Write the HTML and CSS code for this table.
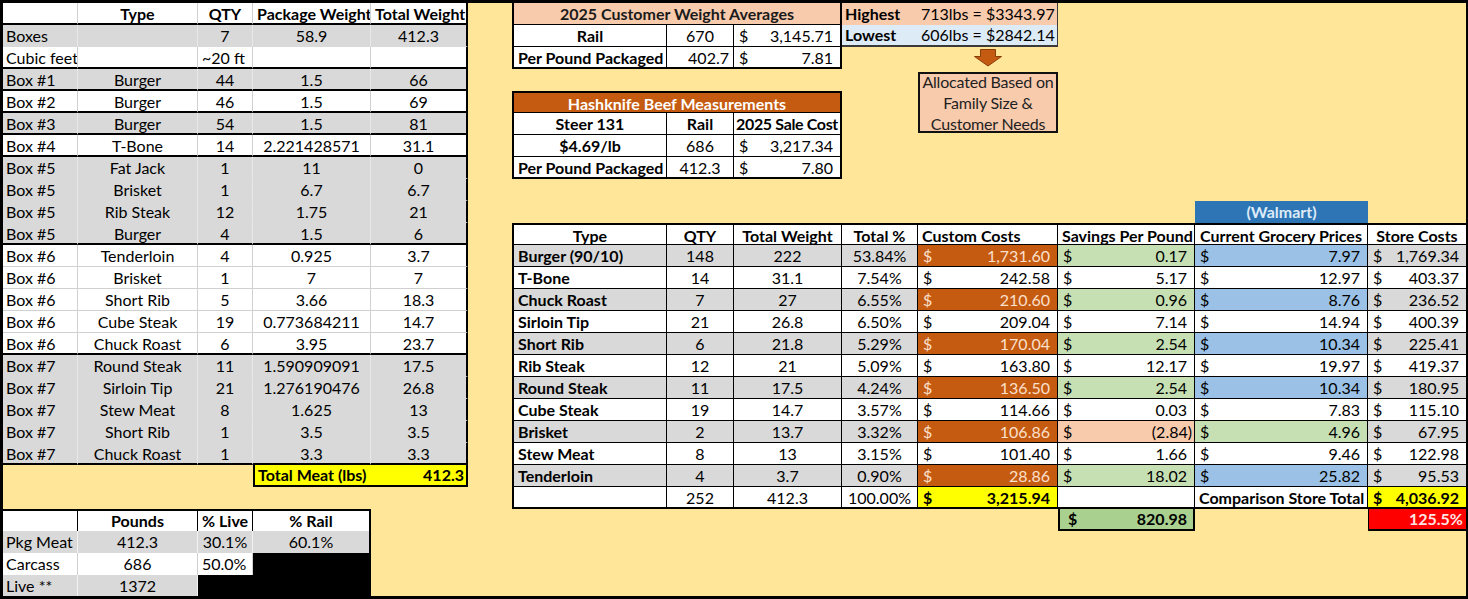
FILE: index.html
```html
<!DOCTYPE html>
<html lang="en">
<head>
<meta charset="utf-8">
<title>Hashknife Beef Measurements</title>
<link rel="stylesheet" href="styles.css">
</head>
<body>
<main class="sheet">

  <section class="tbl lt">
    <div class="r hd end"><div></div><div>Type</div><div>QTY</div><div>Package Weight</div><div>Total Weight</div></div>
    <div class="r g"><div>Boxes</div><div></div><div>7</div><div>58.9</div><div>412.3</div></div>
    <div class="r end"><div>Cubic feet</div><div></div><div class="left">~20 ft</div><div></div><div></div></div>
    <div class="r g end"><div>Box #1</div><div>Burger</div><div>44</div><div>1.5</div><div>66</div></div>
    <div class="r end"><div>Box #2</div><div>Burger</div><div>46</div><div>1.5</div><div>69</div></div>
    <div class="r g end"><div>Box #3</div><div>Burger</div><div>54</div><div>1.5</div><div>81</div></div>
    <div class="r end"><div>Box #4</div><div>T-Bone</div><div>14</div><div>2.221428571</div><div>31.1</div></div>
    <div class="r g"><div>Box #5</div><div>Fat Jack</div><div>1</div><div>11</div><div>0</div></div>
    <div class="r g"><div>Box #5</div><div>Brisket</div><div>1</div><div>6.7</div><div>6.7</div></div>
    <div class="r g"><div>Box #5</div><div>Rib Steak</div><div>12</div><div>1.75</div><div>21</div></div>
    <div class="r g end"><div>Box #5</div><div>Burger</div><div>4</div><div>1.5</div><div>6</div></div>
    <div class="r"><div>Box #6</div><div>Tenderloin</div><div>4</div><div>0.925</div><div>3.7</div></div>
    <div class="r"><div>Box #6</div><div>Brisket</div><div>1</div><div>7</div><div>7</div></div>
    <div class="r"><div>Box #6</div><div>Short Rib</div><div>5</div><div>3.66</div><div>18.3</div></div>
    <div class="r"><div>Box #6</div><div>Cube Steak</div><div>19</div><div>0.773684211</div><div>14.7</div></div>
    <div class="r end"><div>Box #6</div><div>Chuck Roast</div><div>6</div><div>3.95</div><div>23.7</div></div>
    <div class="r g"><div>Box #7</div><div>Round Steak</div><div>11</div><div>1.590909091</div><div>17.5</div></div>
    <div class="r g"><div>Box #7</div><div>Sirloin Tip</div><div>21</div><div>1.276190476</div><div>26.8</div></div>
    <div class="r g"><div>Box #7</div><div>Stew Meat</div><div>8</div><div>1.625</div><div>13</div></div>
    <div class="r g"><div>Box #7</div><div>Short Rib</div><div>1</div><div>3.5</div><div>3.5</div></div>
    <div class="r g end"><div>Box #7</div><div>Chuck Roast</div><div>1</div><div>3.3</div><div>3.3</div></div>
  </section>

  <div class="total-meat"><span>Total Meat (lbs)</span><span>412.3</span></div>

  <section class="tbl stats">
    <div class="r hd"><div></div><div>Pounds</div><div>% Live</div><div>% Rail</div></div>
    <div class="r g"><div>Pkg Meat</div><div>412.3</div><div>30.1%</div><div>60.1%</div></div>
    <div class="r"><div>Carcass</div><div>686</div><div class="left">50.0%</div><div class="blk"></div></div>
    <div class="r g"><div>Live **</div><div>1372</div><div class="blk"></div><div class="blk"></div></div>
  </section>

  <section class="tbl cwa">
    <div class="r"><div class="span3 peach b">2025 Customer Weight Averages</div></div>
    <div class="r"><div class="b">Rail</div><div>670</div><div class="acc"><span>$</span><span>3,145.71</span></div></div>
    <div class="r"><div class="b">Per Pound Packaged</div><div class="right">402.7</div><div class="acc"><span>$</span><span>7.81</span></div></div>
  </section>

  <section class="tbl hl">
    <div class="r hi"><div class="b left">Highest</div><div class="right">713lbs = $3343.97</div></div>
    <div class="r lo"><div class="b left">Lowest</div><div class="right">606lbs = $2842.14</div></div>
  </section>

  <div class="arrow">
    <svg width="30" height="18" viewBox="0 0 30 18" aria-hidden="true">
      <path d="M7.5 0.5 H22.5 V7.5 H28.5 L15 17 L1.5 7.5 H7.5 Z" fill="#c55a11" stroke="#8a3d0b" stroke-width="1"/>
    </svg>
  </div>

  <div class="alloc"><span>Allocated Based on</span><span>Family Size &amp;</span><span>Customer Needs</span></div>

  <section class="tbl hk">
    <div class="r"><div class="span3 rust b">Hashknife Beef Measurements</div></div>
    <div class="r"><div class="b">Steer 131</div><div class="b">Rail</div><div class="b tight">2025 Sale Cost</div></div>
    <div class="r"><div class="b">$4.69/lb</div><div>686</div><div class="acc"><span>$</span><span>3,217.34</span></div></div>
    <div class="r"><div class="b">Per Pound Packaged</div><div>412.3</div><div class="acc"><span>$</span><span>7.80</span></div></div>
  </section>

  <div class="walmart">(Walmart)</div>

  <section class="tbl bt">
    <div class="r hd"><div>Type</div><div>QTY</div><div>Total Weight</div><div>Total %</div><div class="left">Custom Costs</div><div>Savings Per Pound</div><div>Current Grocery Prices</div><div>Store Costs</div></div>
    <div class="r g"><div class="name">Burger (90/10)</div><div>148</div><div>222</div><div>53.84%</div><div class="acc or"><span>$</span><span>1,731.60</span></div><div class="acc gn"><span>$</span><span>0.17</span></div><div class="acc bu"><span>$</span><span>7.97</span></div><div class="acc gy"><span>$</span><span>1,769.34</span></div></div>
    <div class="r"><div class="name">T-Bone</div><div>14</div><div>31.1</div><div>7.54%</div><div class="acc"><span>$</span><span>242.58</span></div><div class="acc"><span>$</span><span>5.17</span></div><div class="acc"><span>$</span><span>12.97</span></div><div class="acc"><span>$</span><span>403.37</span></div></div>
    <div class="r g"><div class="name">Chuck Roast</div><div>7</div><div>27</div><div>6.55%</div><div class="acc or"><span>$</span><span>210.60</span></div><div class="acc gn"><span>$</span><span>0.96</span></div><div class="acc bu"><span>$</span><span>8.76</span></div><div class="acc gy"><span>$</span><span>236.52</span></div></div>
    <div class="r"><div class="name">Sirloin Tip</div><div>21</div><div>26.8</div><div>6.50%</div><div class="acc"><span>$</span><span>209.04</span></div><div class="acc"><span>$</span><span>7.14</span></div><div class="acc"><span>$</span><span>14.94</span></div><div class="acc"><span>$</span><span>400.39</span></div></div>
    <div class="r g"><div class="name">Short Rib</div><div>6</div><div>21.8</div><div>5.29%</div><div class="acc or"><span>$</span><span>170.04</span></div><div class="acc gn"><span>$</span><span>2.54</span></div><div class="acc bu"><span>$</span><span>10.34</span></div><div class="acc gy"><span>$</span><span>225.41</span></div></div>
    <div class="r"><div class="name">Rib Steak</div><div>12</div><div>21</div><div>5.09%</div><div class="acc"><span>$</span><span>163.80</span></div><div class="acc"><span>$</span><span>12.17</span></div><div class="acc"><span>$</span><span>19.97</span></div><div class="acc"><span>$</span><span>419.37</span></div></div>
    <div class="r g"><div class="name">Round Steak</div><div>11</div><div>17.5</div><div>4.24%</div><div class="acc or"><span>$</span><span>136.50</span></div><div class="acc gn"><span>$</span><span>2.54</span></div><div class="acc bu"><span>$</span><span>10.34</span></div><div class="acc gy"><span>$</span><span>180.95</span></div></div>
    <div class="r"><div class="name">Cube Steak</div><div>19</div><div>14.7</div><div>3.57%</div><div class="acc"><span>$</span><span>114.66</span></div><div class="acc"><span>$</span><span>0.03</span></div><div class="acc"><span>$</span><span>7.83</span></div><div class="acc"><span>$</span><span>115.10</span></div></div>
    <div class="r g"><div class="name">Brisket</div><div>2</div><div>13.7</div><div>3.32%</div><div class="acc or"><span>$</span><span>106.86</span></div><div class="acc pc neg"><span>$</span><span>(2.84)</span></div><div class="acc gn"><span>$</span><span>4.96</span></div><div class="acc gy"><span>$</span><span>67.95</span></div></div>
    <div class="r"><div class="name">Stew Meat</div><div>8</div><div>13</div><div>3.15%</div><div class="acc"><span>$</span><span>101.40</span></div><div class="acc"><span>$</span><span>1.66</span></div><div class="acc"><span>$</span><span>9.46</span></div><div class="acc"><span>$</span><span>122.98</span></div></div>
    <div class="r g"><div class="name">Tenderloin</div><div>4</div><div>3.7</div><div>0.90%</div><div class="acc or"><span>$</span><span>28.86</span></div><div class="acc gn"><span>$</span><span>18.02</span></div><div class="acc bu"><span>$</span><span>25.82</span></div><div class="acc gy"><span>$</span><span>95.53</span></div></div>
    <div class="r tot"><div></div><div>252</div><div>412.3</div><div>100.00%</div><div class="acc yl b"><span>$</span><span>3,215.94</span></div><div></div><div class="b">Comparison Store Total</div><div class="acc yl b"><span>$</span><span>4,036.92</span></div></div>
  </section>

  <div class="savings"><span>$</span><span>820.98</span></div>
  <div class="ratio">125.5%</div>

</main>
</body>
</html>
```

FILE: styles.css
```css
html, body {
  margin: 0;
  padding: 0;
}

body {
  background: #ffe699;
  font-family: Lato, "Open Sans", "Liberation Sans", sans-serif;
  font-size: 16px;
  color: #000;
}

.sheet {
  width: 1468px;
  height: 599px;
  box-sizing: border-box;
  border: 3px solid #000;
  border-right-width: 2px;
  background: #ffe699;
  display: grid;
  grid-template-columns: 75px 120px 55px 118px 97px 44px 155px 67px 108px 76px 140px 137px 173px 98px;
  grid-template-rows: repeat(26, 22px) 21px;
}

/* generic sheet table */
.tbl {
  display: grid;
  grid-auto-rows: 22px;
}

.r {
  display: contents;
}

.r > * {
  box-sizing: border-box;
  padding: 0 4px;
  line-height: 21px;
  white-space: nowrap;
  overflow: hidden;
  text-align: center;
  background: #fff;
}

.b { font-weight: 700; }
.sheet .r > .left { text-align: left; }
.sheet .r > .right { text-align: right; }
.sheet .r > .tight {
  padding: 0;
  letter-spacing: -0.35px;
}
.span3 { grid-column: span 3; }

.acc {
  display: flex;
  justify-content: space-between;
}

.sheet .r > .acc {
  padding: 0 7px 0 5px;
}

.sheet .r > .acc.neg {
  padding-right: 2px;
}

/* left box table */
.lt {
  grid-column: 1 / 6;
  grid-row: 1 / 22;
  grid-template-columns: 75px 120px 55px 118px 97px;
}

.lt .r > * {
  border-right: 1px solid #d0d0d0;
  border-bottom: 1px solid #d0d0d0;
}

.lt .r > :first-child {
  text-align: left;
  padding-left: 3px;
}

.lt .g > * {
  background: #d9d9d9;
  border-bottom-color: #d9d9d9;
  border-right-color: #e8e8e8;
}

.lt .r > :last-child {
  border-right: 2px solid #000;
}

.lt .end > * {
  border-bottom: 2px solid #000;
}

.lt .hd > * {
  font-weight: 700;
}

.total-meat {
  grid-column: 4 / 6;
  grid-row: 22;
  background: #ffff00;
  border: 2px solid #000;
  border-top: 0;
  display: flex;
  justify-content: space-between;
  font-weight: 700;
  padding: 0 2px 0 3px;
  line-height: 20px;
}

/* bottom-left stats */
.stats {
  grid-column: 1 / 5;
  grid-row: 24 / 28;
  grid-template-columns: 75px 120px 55px 118px;
  grid-template-rows: repeat(3, 22px) 21px;
}

.stats .r > * {
  border-right: 1px solid #d0d0d0;
}

.stats .r > :first-child {
  text-align: left;
  padding-left: 3px;
}

.stats .g > * {
  background: #d9d9d9;
  border-right-color: #f2f2f2;
}

.stats .hd > * {
  font-weight: 700;
  border-top: 2px solid #000;
  border-right-color: #000;
  line-height: 20px;
}

.stats .r > :last-child {
  border-right: 2px solid #000;
}

.sheet .r > .blk {
  background: #000;
  border-color: #000;
}

/* boxed tables with black grid */
.cwa, .hk {
  grid-template-columns: 155px 67px 108px;
}

.cwa {
  grid-column: 7 / 10;
  grid-row: 1 / 4;
}

.hk {
  grid-column: 7 / 10;
  grid-row: 5 / 9;
}

.cwa .r > *, .hk .r > *, .bt .r > * {
  border-right: 1px solid #000;
  border-bottom: 1px solid #000;
}

.cwa .r > :first-child, .hk .r > :first-child, .bt .r > :first-child {
  border-left: 2px solid #000;
}

.cwa .r > :last-child, .hk .r > :last-child {
  border-right: 2px solid #000;
}

.cwa .r:last-child > *, .hk .r:last-child > *, .bt .r:last-child > * {
  border-bottom: 2px solid #000;
}

.hk .r:first-child > *, .bt .r:first-child > * {
  border-top: 2px solid #000;
}

.sheet .r > .peach {
  background: #f8cbad;
  color: #1a1a1a;
}

.sheet .r > .rust {
  background: #c55a11;
  color: #fff;
}

/* highest / lowest */
.hl {
  grid-column: 10 / 12;
  grid-row: 1 / 3;
  grid-template-columns: 76px 140px;
}

.hl .r > * {
  padding: 0 3px;
}

.hl .hi > * { background: #f8cbad; }
.hl .lo > * {
  background: #ddebf7;
  border-bottom: 2px solid #3a3a3a;
  line-height: 20px;
}
.hl .r > :last-child { border-right: 1px solid #3a3a3a; }

.arrow {
  grid-column: 11;
  grid-row: 3;
  display: flex;
  justify-content: center;
  align-items: center;
}

.alloc {
  grid-column: 11;
  grid-row: 4 / 7;
  margin: 3px 0 2px;
  box-sizing: border-box;
  border: 2px solid #111;
  background: #f8cbad;
  color: #1f1f1f;
  display: flex;
  flex-direction: column;
  justify-content: center;
  align-items: center;
  line-height: 21px;
  letter-spacing: -0.2px;
  white-space: nowrap;
  overflow: visible;
}

/* big comparison table */
.walmart {
  grid-column: 13;
  grid-row: 10;
  background: #2e75b6;
  color: #ddebf7;
  font-weight: 700;
  text-align: center;
  line-height: 22px;
}

.bt {
  grid-column: 7 / 15;
  grid-row: 11 / 24;
  grid-template-columns: 155px 67px 108px 76px 140px 137px 173px 98px;
}

.bt .r > :last-child {
  border-right: 0;
}

.bt .hd > * {
  font-weight: 700;
}

.bt .r > .name {
  text-align: left;
  font-weight: 700;
  padding-left: 4px;
}

.bt .g > * { background: #d9d9d9; }

.sheet .r > .or { background: #c55a11; color: #fbe0cc; }
.sheet .r > .gn { background: #c6e0b4; }
.sheet .r > .bu { background: #9bc2e6; }
.sheet .r > .gy { background: #d9d9d9; }
.sheet .r > .pc { background: #f8cbad; }
.sheet .r > .yl { background: #ffff00; }

.savings {
  grid-column: 12;
  grid-row: 24;
  background: #a9d08e;
  border: 2px solid #000;
  border-top: 0;
  display: flex;
  justify-content: space-between;
  font-weight: 700;
  padding: 0 6px 0 8px;
  line-height: 20px;
}

.ratio {
  grid-column: 14;
  grid-row: 24;
  background: #ff0000;
  color: #ffe4e4;
  font-weight: 700;
  text-align: right;
  padding-right: 3px;
  border-left: 1px solid #000;
  border-bottom: 2px solid #000;
  line-height: 20px;
}
```
